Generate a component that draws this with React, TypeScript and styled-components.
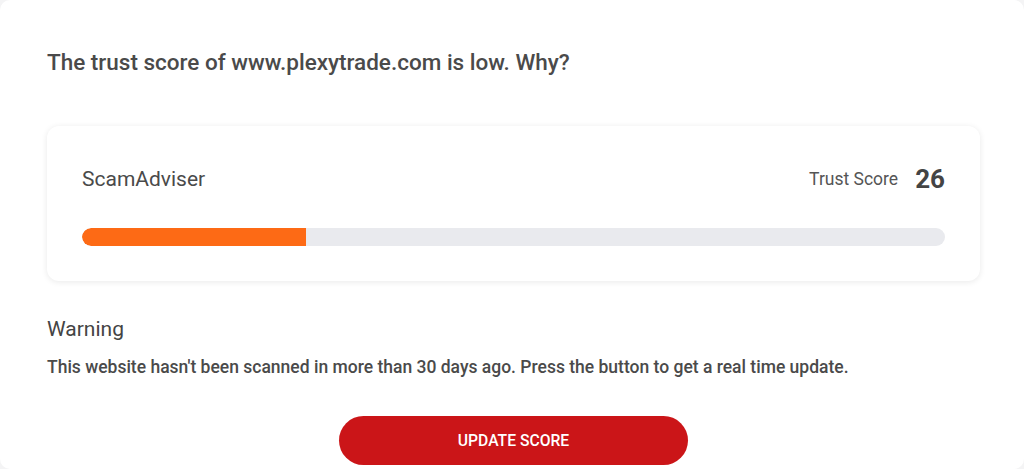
import styled, { createGlobalStyle } from "styled-components";

const GlobalStyle = createGlobalStyle`
  html, body {
    margin: 0;
    padding: 0;
    background: #f4f4f5;
  }
  body {
    font-family: Roboto, "Liberation Sans", Arial, sans-serif;
    color: #4a4a4a;
  }
`;

const score = 26;

export default function App() {
  return (
    <>
      <GlobalStyle />
      <Page>
        <Title>The trust score of www.plexytrade.com is low. Why?</Title>

        <ScoreCard>
          <CardHeader>
            <Source>ScamAdviser</Source>
            <ScoreLabel>
              Trust Score <ScoreValue>{score}</ScoreValue>
            </ScoreLabel>
          </CardHeader>
          <Track>
            <Fill style={{ width: `${score}%` }} />
          </Track>
        </ScoreCard>

        <Subheading>Warning</Subheading>
        <Notice>
          This website hasn't been scanned in more than 30 days ago. Press the
          button to get a real time update.
        </Notice>

        <Actions>
          <UpdateButton type="button">Update score</UpdateButton>
        </Actions>
      </Page>
    </>
  );
}

const Page = styled.div`
  background: #fff;
  border-radius: 10px;
  height: 469px;
  box-sizing: border-box;
  padding: 49px 44px 0 47px;
  overflow: hidden;
`;

const Title = styled.h2`
  margin: 0;
  font-size: 22.5px;
  line-height: 26px;
  font-weight: 500;
  color: #4a4a4a;
`;

const ScoreCard = styled.div`
  margin-top: 51px;
  background: #fff;
  border-radius: 12px;
  box-shadow: 0 1px 6px rgba(0, 0, 0, 0.09);
  padding: 38px 35px 35px;
`;

const CardHeader = styled.div`
  display: flex;
  align-items: center;
  justify-content: space-between;
  height: 30px;
`;

const Source = styled.span`
  font-size: 21px;
  color: #4a4a4a;
`;

const ScoreLabel = styled.span`
  display: flex;
  align-items: center;
  gap: 17px;
  font-size: 17.5px;
  color: #555;
`;

const ScoreValue = styled.span`
  font-size: 26px;
  font-weight: 700;
  color: #444;
`;

const Track = styled.div`
  margin-top: 34px;
  height: 18px;
  background: #e9eaee;
  border-radius: 9px;
  overflow: hidden;
`;

const Fill = styled.div`
  height: 100%;
  background: #fd6a15;
  border-radius: 9px 0 0 9px;
`;

const Subheading = styled.h3`
  margin: 36px 0 0;
  font-size: 21px;
  line-height: 24px;
  font-weight: 400;
  color: #444;
`;

const Notice = styled.p`
  margin: 15px 0 0;
  font-size: 17.5px;
  line-height: 22px;
  font-weight: 500;
  color: #4a4a4a;
`;

const Actions = styled.div`
  display: flex;
  justify-content: center;
  margin-top: 38px;
`;

const UpdateButton = styled.button`
  width: 349px;
  height: 49px;
  border: none;
  border-radius: 25px;
  background: #cb1518;
  color: #fff;
  font-family: Roboto, "Liberation Sans", Arial, sans-serif;
  font-size: 15.7px;
  font-weight: 500;
  text-transform: uppercase;
  cursor: pointer;
`;
